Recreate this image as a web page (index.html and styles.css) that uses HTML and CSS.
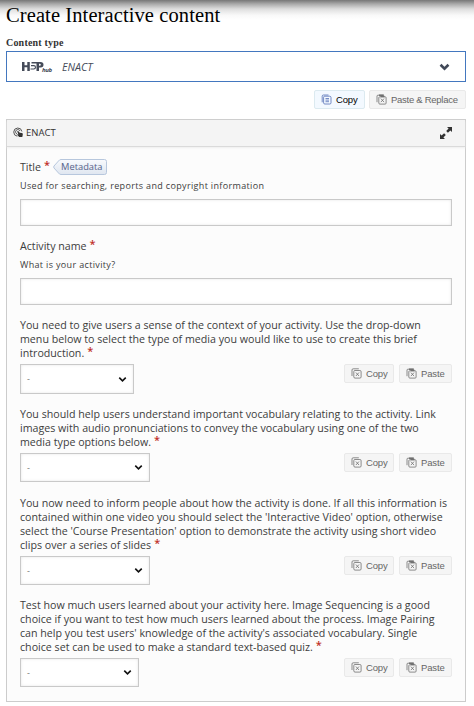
FILE: index.html
```
<!DOCTYPE html>
<html lang="en">
<head>
<meta charset="utf-8">
<title>Create Interactive content</title>
<link rel="stylesheet" href="styles.css">
</head>
<body>
<svg class="defs" width="0" height="0">
  <symbol id="copy" viewBox="0 0 11 11"><path d="M1.2 8.3V2.2Q1.2 1 2.4 1H7.5M2.6 8.8V3.3Q2.6 2.2 3.7 2.2H8.6Q10 2.2 10 3.6V8.8Q10 10 8.8 10H3.8Q2.6 10 2.6 8.8Z"/><path d="M4.5 4.5H8M4.5 6.1H8M4.5 7.7H8"/></symbol>
  <symbol id="copyx" viewBox="0 0 11 11"><path d="M1 8V2Q1 .8 2.2 .8H7.8M2.8 8.8V3.6Q2.8 2.5 3.9 2.5H8.9Q10.1 2.5 10.1 3.7V8.9Q10.1 10.1 8.9 10.1H4Q2.8 10.1 2.8 8.8Z"/><path d="M4.9 4.5L8 8M8 4.5L4.9 8"/></symbol>
  <symbol id="pastex" viewBox="0 0 11 11"><path d="M1 8.2V2Q1 1.2 2 1.2H8M2.8 9V3.6Q2.8 2.8 3.7 2.8H9.2Q10.1 2.8 10.1 3.7V9.1Q10.1 10.1 9.1 10.1H3.8Q2.8 10.1 2.8 9Z"/><path d="M3 1.2H7.6M4.5 2.4H8.5" stroke-width="1.5"/><path d="M4.9 4.6L8 8.1M8 4.6L4.9 8.1"/></symbol>
  <symbol id="chev" viewBox="0 0 10 7"><path d="M1.4 1.5L5 5L8.6 1.5"/></symbol>
</svg>
<main>
  <h1>Create Interactive content</h1>
  <div class="type-label">Content type</div>
  <div class="hub">
    <svg class="logo" width="32" height="14" viewBox="0 0 32 14"><path class="shape" d="M0 2h2.500v3.200h2.800V2h2.500v9H5.300V7.200H2.500V11H0zM9.500 2h9q3 0 3 2.800t-3 2.700H17V11H14.500V3.500H9.500zM17 3.800v2h.8q1 0 1-1t-1-1z"/><path d="M9 5.600h2.800q1.700 0 1.700 1.700t-1.700 1.700H8.500" fill="none" stroke="#454b59" stroke-width="1.100"/><text x="20" y="12" textLength="10">hub</text></svg>
    <em>ENACT</em>
    <svg class="chev" width="11" height="8"><use href="#chev"/></svg>
  </div>
  <div class="actions top">
    <span class="btn active w-copy"><svg width="11" height="11"><use href="#copy"/></svg>Copy</span>
    <span class="btn w-replace"><svg width="11" height="11"><use href="#pastex"/></svg>Paste &amp; Replace</span>
  </div>
  <section class="panel">
    <header>
      <svg class="target" width="11" height="11" viewBox="0 0 11 11"><path d="M4.300 9.200A4.100 4.100 0 1 1 8.900 4.500M4 7A2.300 2.300 0 1 1 7 4" fill="none" stroke="#555" stroke-width="1"/><path d="M4.200 4.300q.8-.7 1.500.2l1 1.200 2.300.3q1 .3.800 1.400L9.300 10H6.200L4 7.800q.4-.8 1.400-.2z" fill="#333"/></svg>
      <span>ENACT</span>
      <svg class="expand" width="14" height="14" viewBox="0 0 14 14"><path d="M8 1h5v5l-1.600-1.600-2.500 2.400-1.700-1.700 2.400-2.500zM1 8l1.600 1.600 2.500-2.400 1.700 1.700-2.400 2.500L6 13H1z"/></svg>
    </header>
    <div class="body">
      <div class="label"><span>Title</span><b>*</b>
        <span class="tag"><svg width="54" height="16" viewBox="0 0 54 16"><defs><linearGradient id="tg" x2="0" y2="1"><stop stop-color="#f8fafd"/><stop offset="1" stop-color="#dfe6f0"/></linearGradient></defs><path d="M8 .5H51.500Q53.500 .5 53.500 2.500V13.500Q53.500 15.500 51.500 15.500H8Q6.500 15.500 5.500 14L1 9Q.4 8 1 7L5.500 2Q6.500 .5 8 .5Z" fill="url(#tg)" stroke="#b7c7dd"/></svg><span>Metadata</span></span>
      </div>
      <div class="hint">Used for searching, reports and copyright information</div>
      <div class="input"></div>
      <div class="label second"><span>Activity name</span><b>*</b></div>
      <div class="hint">What is your activity?</div>
      <div class="input"></div>

      <p>You need to give users a sense of the context of your activity. Use the drop-down<br>menu below to select the type of media you would like to use to create this brief<br>introduction.<b>*</b></p>
      <div class="row tall"><div class="select s1">-<svg width="9" height="7"><use href="#chev"/></svg></div><div class="actions"><span class="btn w-c"><svg width="11" height="11"><use href="#copyx"/></svg>Copy</span><span class="btn w-p"><svg width="11" height="11"><use href="#pastex"/></svg>Paste</span></div></div>

      <p>You should help users understand important vocabulary relating to the activity. Link<br>images with audio pronunciations to convey the vocabulary using one of the two<br>media type options below.<b>*</b></p>
      <div class="row"><div class="select s2">-<svg width="9" height="7"><use href="#chev"/></svg></div><div class="actions"><span class="btn w-c"><svg width="11" height="11"><use href="#copyx"/></svg>Copy</span><span class="btn w-p"><svg width="11" height="11"><use href="#pastex"/></svg>Paste</span></div></div>

      <p class="gap">You now need to inform people about how the activity is done. If all this information is<br>contained within one video you should select the 'Interactive Video' option, otherwise<br>select the 'Course Presentation' option to demonstrate the activity using short video<br>clips over a series of slides<b>*</b></p>
      <div class="row"><div class="select s2">-<svg width="9" height="7"><use href="#chev"/></svg></div><div class="actions"><span class="btn w-c"><svg width="11" height="11"><use href="#copyx"/></svg>Copy</span><span class="btn w-p"><svg width="11" height="11"><use href="#pastex"/></svg>Paste</span></div></div>

      <p>Test how much users learned about your activity here. Image Sequencing is a good<br>choice if you want to test how much users learned about the process. Image Pairing<br>can help you test users' knowledge of the activity's associated vocabulary. Single<br>choice set can be used to make a standard text-based quiz.<b>*</b></p>
      <div class="row"><div class="select s3">-<svg width="9" height="7"><use href="#chev"/></svg></div><div class="actions"><span class="btn w-c"><svg width="11" height="11"><use href="#copyx"/></svg>Copy</span><span class="btn w-p"><svg width="11" height="11"><use href="#pastex"/></svg>Paste</span></div></div>
    </div>
  </section>
</main>
</body>
</html>
```
FILE: styles.css
```
* { box-sizing: border-box; }
body { margin: 0; height: 706px; overflow: hidden; background: linear-gradient(#777 0, #aaa 4px, #dedede 9px, #f8f8f8 15px, #fff 20px) no-repeat #fff; color: #3c3c3c; font-family: "Open Sans", sans-serif; }
.defs { display: block; position: absolute; }
svg { flex: none; }
main { padding: 0 8px 0 6px; }
h1 { margin: 0; height: 36px; padding-top: 3px; font: 400 20.500px/24px "Liberation Serif", serif; letter-spacing: .1px; color: #000; white-space: nowrap; }
.type-label { height: 15px; font: 700 10px/14px "Liberation Serif", serif; letter-spacing: .2px; color: #333; }
.hub { height: 31px; border: 1px solid #4377bf; display: flex; align-items: center; padding: 0 15px; background: #fff; font-size: 10.700px; }
.logo { margin-right: 8px; }
.logo .shape { fill: #454b59; }
.logo text { font: italic 700 6px "Open Sans", sans-serif; fill: #454b59; }
.hub em { color: #454b59; }
.chev { margin-left: auto; fill: none; stroke: #414958; stroke-width: 2.400; }
.actions { display: flex; gap: 5px; }
.actions.top { justify-content: flex-end; gap: 4px; padding-top: 8px; height: 37px; }
.btn { height: 19px; border: 1px solid #e9e9e9; border-radius: 2px; background: #f5f5f5; color: #666; font: 9.500px/17px "Liberation Sans", sans-serif; letter-spacing: -.15px; display: flex; align-items: center; padding-left: 6px; gap: 4px; white-space: nowrap; }
.btn svg { fill: none; stroke: #707070; stroke-width: .8; }
.btn.active { background: #f3f9ff; border-color: #dceaf0; color: #000; }
.btn.active svg { stroke: #536eb5; }
.w-copy { width: 51px; }
.w-replace { width: 97px; letter-spacing: -.27px; }
.w-c { width: 50px; }
.w-p { width: 53px; }
.panel { height: 583px; border: 1px solid #ccc; background: #fcfcfc; }
header { height: 27px; display: flex; align-items: center; background: #f4f4f4; border-bottom: 1px solid #dadada; padding: 0 12px 1px 6px; font-size: 9.500px; color: #333; box-shadow: 0 1px 2px #eee; }
header span { margin-left: 2px; }
.expand { margin-left: auto; fill: #333; }
.body { padding: 12px 13px 0; font-size: 10.660px; line-height: 14px; }
.label { height: 16px; display: flex; align-items: center; }
.label.second { margin-top: 12px; }
b { color: #c03028; font-size: 11px; font-weight: 600; line-height: 8px; margin-left: 3px; vertical-align: 2px; }
.label b { margin-top: -4px; }
.tag { margin-left: 3px; height: 16px; display: grid; font-size: 9.300px; line-height: 15px; color: #56628a; }
.tag > * { grid-area: 1 / 1; }
.tag span { padding-left: 8px; }
.hint { height: 24px; padding-top: 4px; font-size: 9px; letter-spacing: .34px; line-height: 14px; color: #3c3c3c; white-space: nowrap; }
.input, .select { border: 1px solid #c9c9c9; background: #fff; box-shadow: inset 0 0 3px #e5e5e5; }
.input { height: 27px; }
p { margin: 13px 0 4px; white-space: nowrap; }
.row { display: flex; justify-content: space-between; height: 29px; }
.row.tall { height: 30px; }
p.gap { margin-top: 14px; }
.select { display: flex; justify-content: space-between; align-items: center; padding: 0 6px; font-size: 9px; color: #777; }
.select svg { fill: none; stroke: #111; stroke-width: 1.800; }
.s1 { width: 114px; }
.s2 { width: 130px; }
.s3 { width: 119px; }
```
